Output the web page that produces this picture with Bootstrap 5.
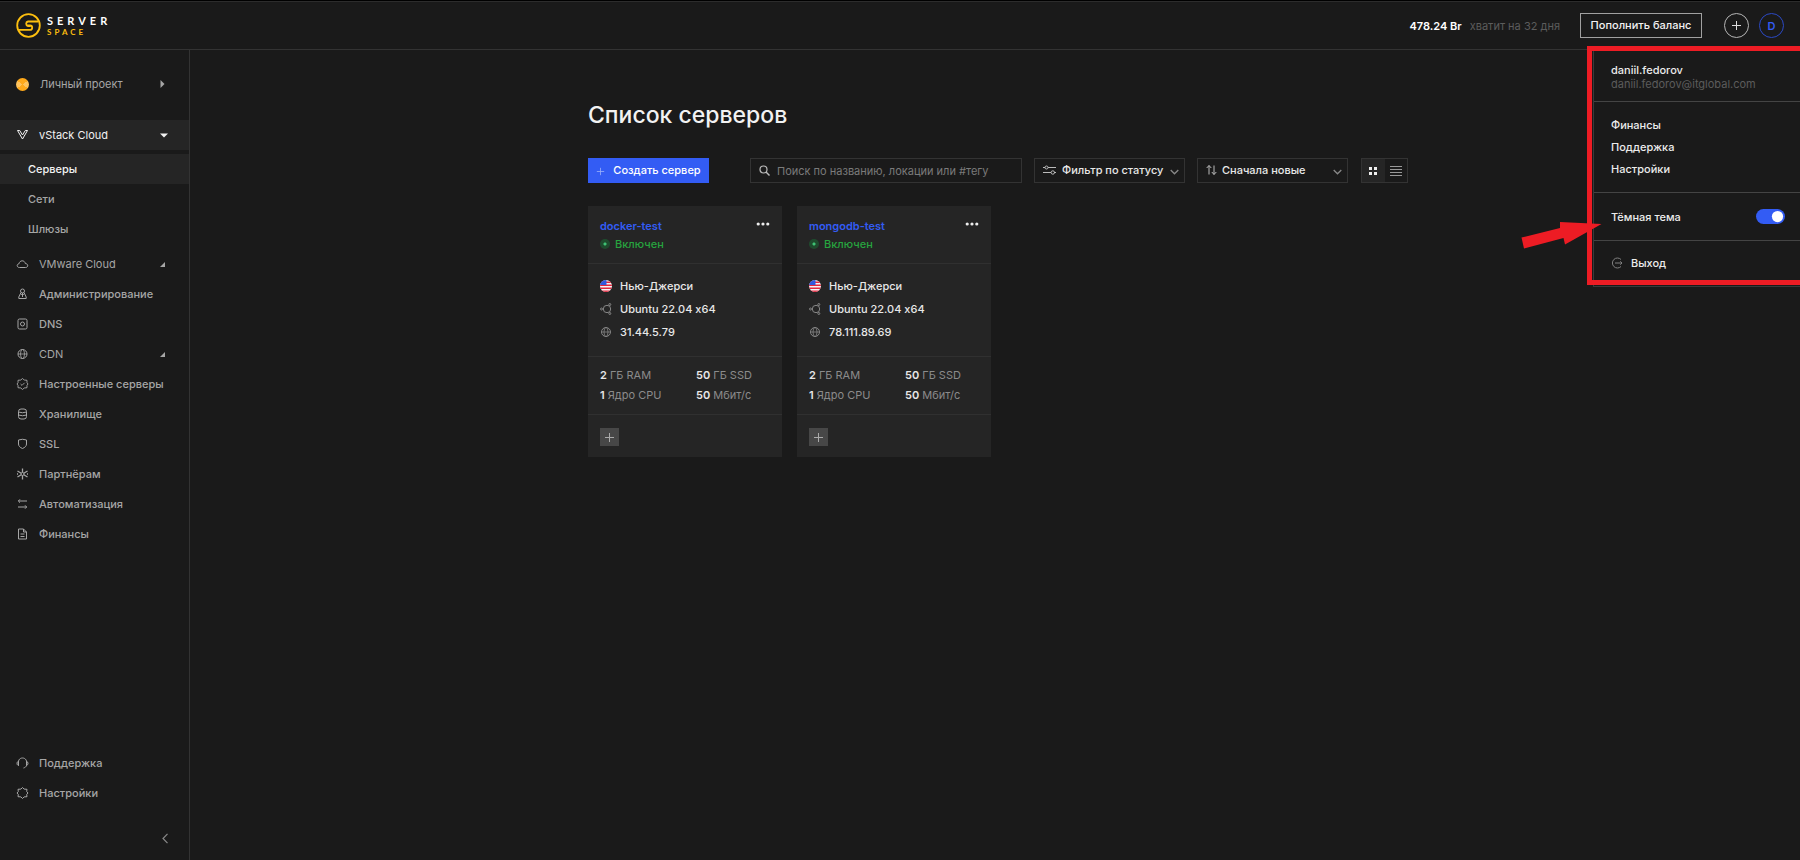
<!DOCTYPE html>
<html lang="ru" data-bs-theme="dark">
<head>
<meta charset="utf-8">
<meta name="viewport" content="width=device-width, initial-scale=1">
<title>Serverspace — Список серверов</title>
<link href="https://cdn.jsdelivr.net/npm/bootstrap@5.3.0/dist/css/bootstrap.min.css" rel="stylesheet">
<style>
  :root { --bg: #1a1a1a; --panel: #252525; --line: #333; --blue: #335cf4; --muted: #a6a6a6; --dim: #5c5c5c; --red: #ed1c24; }
  body { background: var(--bg); color: #e8e8e8; font-family: Inter, "Liberation Sans", sans-serif; font-size: 11px; line-height: 14px; font-weight: 500; font-variant-ligatures: no-contextual; border-top: 1px solid #000; overflow-x: hidden; }
  svg { display: block; flex: none; fill: none; stroke: currentColor; }
  a { color: inherit; text-decoration: none; }
  .page { min-height: calc(100vh - 1px); }
  .topbar { height: 49px; border-top: 1px solid #2c2c2c; border-bottom: 1px solid var(--line); padding: 0 16px; }
  .brand-text { font-family: Lato, sans-serif; font-weight: 700; line-height: 10px; padding-left: 6px; }
  .brand-text .top { font-size: 11px; letter-spacing: 4px; color: #fff; line-height: 12px; }
  .brand-text .bottom { font-size: 8px; letter-spacing: 3px; color: #fdbf0f; }
  .btn { --bs-btn-font-size: 11px; --bs-btn-line-height: 14px; --bs-btn-font-weight: 500; --bs-btn-border-radius: 0; }
  .btn-balance { height: 25px; width: 122px; margin: 0 22px 0 20px; padding: 0 0 2px; border: 1px solid #a0a0a0; color: #f2f2f2; }
  .btn-round { width: 25px; height: 25px; padding: 0; border-radius: 50%; border: 1px solid #b5b5b5; color: #ddd; }
  .btn-user { border-color: #2b49c4; color: var(--blue); font-weight: 600; margin-left: 10px; }
  .dim { color: var(--dim); font-weight: 400; }
  .sidebar { width: 190px; border-right: 1px solid var(--line); color: var(--muted); }
  .side-item { display: flex; align-items: center; width: 100%; height: 30px; padding: 0 20px 0 16px; border: 0; background: none; color: inherit; text-align: left; }
  .side-item > svg:first-child { width: 13px; margin-right: 10px; }
  .side-item .caret { margin-left: auto; fill: currentColor; stroke: none; }
  .side-item.open { background: var(--panel); color: #f2f2f2; }
  .side-item.project { margin: 19px 0 21px; font-weight: 400; }
  .side-item.side-sub { padding-left: 28px; }
  .side-list { margin-top: 5px; }
  .project-dot { width: 13px; height: 13px; border-radius: 50%; margin-right: 11px; background: conic-gradient(#ffa91a 0 15%, #ffc35c 0 35%, #ffa91a 0 65%, #ffc35c 0 85%, #ffa91a 0); }
  .side-bottom { margin-bottom: 25px; }
  .content-box { width: 100%; max-width: 820px; margin-left: 6px; padding-top: 50px; }
  h1 { font-size: 23px; line-height: 30px; font-weight: 500; color: #f2f2f2; }
  .tool { height: 25px; }
  .toolbar { margin-bottom: 23px; }
  .btn-create { width: 121px; margin-right: 41px; background: var(--blue); color: #fff; padding: 0 0 2px; border: 0; }
  .field { position: relative; }
  .field-pick { width: 151px; margin-left: 12px; }
  .field > svg { position: absolute; top: 6px; left: 9px; pointer-events: none; color: #bbb; }
  .field > .chev { left: auto; right: 6px; top: 11px; color: #888; }
  .field .form-control, .field .form-select { width: 100%; height: 25px; min-height: 0; padding: 0 8px 0 26px; border: 1px solid var(--line); border-radius: 0; background: none; color: #e8e8e8; font-size: 11px; line-height: 14px; font-weight: 500; }
  .field .form-control::placeholder { color: #7b7b7b; font-weight: 400; opacity: 1; }
  .field .form-select { padding: 0 8px 2px 24px; }
  .field .form-select.wide-icon { padding-left: 27px; }
  .field option { background: var(--panel); }
  .view-switch { width: 47px; margin-left: 13px; border: 1px solid var(--line); }
  .view-switch .btn { flex: 1; padding: 0; border: 0; color: #999; }
  .view-switch .active { background: var(--panel); color: #eee; }
  .servers { gap: 15px; }
  .server { width: 194px; background: var(--panel); }
  .server > * { padding: 0 12px; }
  .server > * + * { border-top: 1px solid #303030; }
  .srv-head { height: 57px; padding-top: 12px; }
  .srv-name { color: var(--blue); line-height: 16px; font-weight: 600; }
  .srv-state { color: #27a33f; line-height: 20px; gap: 5px; }
  .state-dot { width: 10px; height: 10px; border-radius: 50%; background: radial-gradient(circle, #3fc274 0 1px, #1e4b2d 2px 5px); }
  .srv-info { height: 93px; padding-top: 10px; }
  .srv-info li { display: flex; align-items: center; height: 23px; gap: 8px; }
  .srv-info svg { width: 12px; color: #868686; }
  .srv-spec { height: 58px; padding-top: 8px; line-height: 20px; color: #8b8b8b; font-weight: 400; }
  .srv-spec b { color: #e8e8e8; font-weight: 600; }
  .srv-spec > div:first-child { flex: none; width: 96px; }
  .srv-foot { height: 43px; padding-top: 13px; }
  .btn-tag { width: 19px; height: 18px; padding: 0; border: 0; background: #474747; color: #aaa; }
  .btn-dots { padding: 0; border: 0; height: 12px; color: #eee; }
  .user-menu { position: absolute; top: 49px; right: 0; width: 207px; background: var(--bg); border: 1px solid #3a3a3a; border-right: 0; color: #ececec; }
  .user-menu > * { padding: 12px 15px 12px 17px; }
  .user-menu > * + * { border-top: 1px solid #444; }
  .user-menu > .menu-user { padding-bottom: 10px; }
  .user-menu a { display: flex; align-items: center; height: 22px; }
  .user-menu > .menu-theme { height: 48px; padding-top: 0; padding-bottom: 0; }
  .user-menu > .menu-exit { padding-top: 11px; }
  .form-switch .form-check-input { width: 29px; height: 15px; margin: 0; border: 0; background-color: var(--blue); box-shadow: none; }
  .mark-frame { position: absolute; top: 45px; right: -5px; width: 218px; height: 239px; border: 5px solid var(--red); pointer-events: none; }
  .mark-arrow { position: absolute; top: 219px; right: 198px; fill: var(--red); stroke: none; pointer-events: none; }
</style>
</head>
<body>
<!-- shared icons -->
<svg width="0" height="0" class="position-absolute" aria-hidden="true">
  <symbol id="i-globe" viewBox="0 0 12 12"><circle cx="6" cy="6" r="4.500"/><ellipse cx="6" cy="6" rx="2" ry="4.500" stroke-width=".8"/><path d="M1.500 6h9" stroke-width=".8"/></symbol>
  <symbol id="i-plus" viewBox="0 0 11 11"><path d="M5.500 1v9M1 5.500h9"/></symbol>
  <symbol id="i-chev" viewBox="0 0 9 6"><path d="M.7 1l3.800 3.800L8.300 1" stroke-width="1.300"/></symbol>
  <symbol id="i-ubuntu" viewBox="0 0 12 12"><circle cx="7" cy="6" r="3.700"/><circle cx="1.500" cy="6" r="1"/><circle cx="9.800" cy="1.500" r="1"/><circle cx="9.800" cy="10.500" r="1"/></symbol>
  <symbol id="i-dots" viewBox="0 0 14 4"><g fill="currentColor" stroke="none"><circle cx="2.200" cy="2" r="1.600"/><circle cx="7" cy="2" r="1.600"/><circle cx="11.800" cy="2" r="1.600"/></g></symbol>
  <symbol id="i-flag" viewBox="0 0 12 12"><clipPath id="round"><circle cx="6" cy="6" r="6"/></clipPath><g clip-path="url(#round)" stroke="none"><path fill="#f4f4f4" d="M0 0h12v12H0z"/><path fill="#e3273e" d="M0 1.500h12V3H0zM0 4.500h12V6H0zM0 7.500h12V9H0zM0 10.500h12V12H0z"/><path fill="#3059dd" d="M0 0h6.500v5H0z"/></g></symbol>
</svg>

<div class="page d-flex flex-column position-relative">
  <header class="topbar d-flex align-items-center">
    <a href="#" class="d-flex align-items-center" aria-label="Serverspace">
      <svg width="25" height="25" viewBox="0 0 25 25" style="color:#fdbf0f"><circle cx="12.500" cy="12.500" r="11.300" stroke-width="1.800"/><path d="M22.500 8.500H12a2.300 2.300 0 0 0 0 4.500h2.500M10.500 12.500H14a2.200 2.200 0 0 1 0 4.400H2.500" stroke-width="1.800"/></svg>
      <span class="brand-text d-flex flex-column"><span class="top">SERVER</span><span class="bottom">SPACE</span></span>
    </a>
    <div class="d-flex align-items-center ms-auto">
      <span class="fw-semibold text-white">478.24 Br</span><span class="dim ms-2">хватит на 32 дня</span>
      <button type="button" class="btn btn-balance">Пополнить баланс</button>
      <button type="button" class="btn btn-round d-flex align-items-center justify-content-center" aria-label="Создать"><svg width="11" height="11"><use href="#i-plus"/></svg></button>
      <button type="button" class="btn btn-round btn-user" aria-label="Профиль">D</button>
    </div>
  </header>

  <div class="d-flex flex-grow-1">
    <nav class="sidebar d-flex flex-column flex-shrink-0">
      <button type="button" class="side-item project"><span class="project-dot"></span>Личный проект<svg class="caret me-1" width="5" height="8" viewBox="0 0 5 8"><path d="M.5 0l4 4-4 4z"/></svg></button>
      <button type="button" class="side-item open mb-1"><svg width="13" height="12" viewBox="0 0 13 12"><path d="M1.500 1.500h2.200L6.500 6l2.800-4.500h2.200L6.500 10z"/></svg>vStack Cloud<svg class="caret" width="9" height="5" viewBox="0 0 9 5"><path d="M0 .5h8L4 4.500z"/></svg></button>
      <a href="#" class="side-item side-sub open">Серверы</a>
      <a href="#" class="side-item side-sub">Сети</a>
      <a href="#" class="side-item side-sub">Шлюзы</a>
      <div class="side-list">
        <button type="button" class="side-item"><svg width="13" height="12" viewBox="0 0 13 12"><path d="M3.500 9.500C.5 9.500.5 6 3 5.800 3.500 2 8.700 1.800 9.300 5.500c3.200.2 3.200 4 .2 4z"/></svg>VMware Cloud<svg class="caret me-1" width="5" height="5"><path d="M5 0v5H0z"/></svg></button>
        <a href="#" class="side-item"><svg width="13" height="12" viewBox="0 0 13 12"><circle cx="6.500" cy="3" r="2"/><path d="M5 4.500L2.800 9v1.500h7.400V9L8 4.500M6.500 5v4M5.200 6.500h2.600"/></svg>Администрирование</a>
        <a href="#" class="side-item"><svg width="13" height="12" viewBox="0 0 13 12"><rect x="2" y="1" width="9" height="10" rx="1.500"/><circle cx="6.500" cy="6" r="2"/></svg>DNS</a>
        <button type="button" class="side-item"><svg width="13" height="12"><use href="#i-globe"/></svg>CDN<svg class="caret me-1" width="5" height="5"><path d="M5 0v5H0z"/></svg></button>
        <a href="#" class="side-item"><svg width="13" height="12" viewBox="0 0 13 12"><path d="M6.500.5l1.700 1.500 2.800.3v2.400L12 6l-1 1.300v2.400l-2.800.3-1.700 1.500L4.800 10 2 9.700V7.300L1 6l1-1.300V2.300L4.800 2zM4.600 6l1.400 1.400 2.600-2.600" stroke-width=".9"/></svg>Настроенные серверы</a>
        <a href="#" class="side-item"><svg width="13" height="12" viewBox="0 0 13 12"><rect x="2.500" y="1" width="8" height="10" rx="2.500"/><path d="M2.500 4q4 1.500 8 0M2.500 7q4 1.500 8 0"/></svg>Хранилище</a>
        <a href="#" class="side-item"><svg width="13" height="12" viewBox="0 0 13 12"><path d="M2.500 2q4-1.500 8 0v4c0 2-1.500 3.500-4 4.500C4 9.500 2.500 8 2.500 6z"/></svg>SSL</a>
        <a href="#" class="side-item"><svg width="13" height="12" viewBox="0 0 13 12"><circle cx="6.500" cy="6" r="1.500"/><path d="M6.500.5v4M6.500 7.500v4M1.500 3l3.700 2.200M7.800 6.800L11.500 9M1.500 9l3.700-2.200M7.800 5.200L11.500 3M1 6h1M11 6h1" stroke-width="1.300"/></svg>Партнёрам</a>
        <a href="#" class="side-item"><svg width="13" height="12" viewBox="0 0 13 12"><path d="M11 3H2.500M4 1.300L2.300 3 4 4.700M2 9h8.500M9 7.300L10.700 9 9 10.700"/></svg>Автоматизация</a>
        <a href="#" class="side-item"><svg width="13" height="12" viewBox="0 0 13 12"><path d="M2.500 1h5L10.500 4v7h-8zM7.500 1v3h3M4.500 6h4M4.500 8.500h4"/></svg>Финансы</a>
      </div>
      <div class="side-bottom mt-auto">
        <a href="#" class="side-item"><svg width="13" height="12" viewBox="0 0 13 12"><path d="M2.500 8.500C1.500 3.500 3.500 1 6.500 1s5 2.500 4 7.500c-.5 1.500-1.500 2-3 2.500M2.500 4.300C.5 4.800.5 8 2.500 8.500zM10.500 4.300c2 .5 2 3.700 0 4.200z"/></svg>Поддержка</a>
        <a href="#" class="side-item"><svg width="13" height="12" viewBox="0 0 13 12"><path d="M6.500.5l1.600 1.600 2.900.2-.3 2.200L12 6l-1.300 1.500.3 2.200-2.900.2-1.600 1.600-1.600-1.600L2 9.700l.3-2.200L1 6l1.300-1.500L2 2.300l2.900-.2z"/></svg>Настройки</a>
      </div>
      <button type="button" class="btn p-0 border-0 align-self-end me-3 mb-3" style="color:#888" aria-label="Свернуть меню"><svg width="13" height="11" viewBox="0 0 13 11"><path d="M7.500.8L3 5.500l4.500 4.700" stroke-width="1.200"/></svg></button>
    </nav>

    <main class="flex-grow-1 d-flex justify-content-center px-2">
      <div class="content-box">
        <h1 class="mb-4 pb-1">Список серверов</h1>
        <div class="toolbar d-flex align-items-center">
          <button type="button" class="btn btn-create tool d-flex align-items-center justify-content-center gap-2"><svg class="opacity-50 mt-1" width="9" height="9" viewBox="0 0 11 11"><use href="#i-plus" width="11" height="11"/></svg>Создать сервер</button>
          <div class="field flex-grow-1">
            <svg width="11" height="13" viewBox="0 0 11 13"><circle cx="4.500" cy="5.500" r="3.500" stroke-width="1.200"/><path d="M7 8l3.500 3.500" stroke-width="1.400"/></svg>
            <input type="text" class="form-control" aria-label="Поиск" placeholder="Поиск по названию, локации или #тегу">
          </div>
          <div class="field field-pick">
            <svg width="13" height="12" viewBox="0 0 13 12"><path d="M0 3.500h2M5 3.500h8M0 8.500h8M11 8.500h2"/><circle cx="3.500" cy="3.500" r="1.500"/><circle cx="9.800" cy="8.500" r="1.700"/></svg>
            <select class="form-select wide-icon" aria-label="Статус"><option>Фильтр по статусу</option></select>
            <svg class="chev" width="9" height="6"><use href="#i-chev"/></svg>
          </div>
          <div class="field field-pick">
            <svg width="11" height="12" viewBox="0 0 11 12"><path d="M3 10.500V1.500M.7 4L3 1.500 5.300 4M8 1.500v9M5.800 8L8 10.500 10.300 8"/></svg>
            <select class="form-select" aria-label="Сортировка"><option>Сначала новые</option></select>
            <svg class="chev" width="9" height="6"><use href="#i-chev"/></svg>
          </div>
          <div class="view-switch tool d-flex">
            <button type="button" class="btn active d-flex align-items-center justify-content-center" aria-label="Плитка"><svg width="8" height="8" viewBox="0 0 8 8"><path fill="currentColor" stroke="none" d="M0 0h3v3H0zM5 0h3v3H5zM0 5h3v3H0zM5 5h3v3H5z"/></svg></button>
            <button type="button" class="btn d-flex align-items-center justify-content-center" aria-label="Список"><svg width="12" height="10" viewBox="0 0 12 10"><path d="M0 .5h12M0 3.500h12M0 6.500h12M0 9.500h12"/></svg></button>
          </div>
        </div>

        <div class="servers d-flex">
          <section class="server">
            <div class="srv-head">
              <div class="d-flex justify-content-between"><a href="#" class="srv-name">docker-test</a><button type="button" class="btn btn-dots" aria-label="Действия"><svg width="14" height="4"><use href="#i-dots"/></svg></button></div>
              <div class="srv-state d-flex align-items-center"><span class="state-dot"></span>Включен</div>
            </div>
            <ul class="srv-info list-unstyled m-0">
              <li><svg width="12" height="12"><use href="#i-flag"/></svg>Нью-Джерси</li>
              <li><svg width="12" height="12"><use href="#i-ubuntu"/></svg>Ubuntu 22.04 x64</li>
              <li><svg width="12" height="12"><use href="#i-globe"/></svg>31.44.5.79</li>
            </ul>
            <div class="srv-spec d-flex">
              <div><b>2</b> ГБ RAM<br><b>1</b> Ядро CPU</div><div><b>50</b> ГБ SSD<br><b>50</b> Мбит/с</div>
            </div>
            <div class="srv-foot"><button type="button" class="btn btn-tag d-flex align-items-center justify-content-center" aria-label="Добавить тег"><svg width="11" height="11"><use href="#i-plus"/></svg></button></div>
          </section>
          <section class="server">
            <div class="srv-head">
              <div class="d-flex justify-content-between"><a href="#" class="srv-name">mongodb-test</a><button type="button" class="btn btn-dots" aria-label="Действия"><svg width="14" height="4"><use href="#i-dots"/></svg></button></div>
              <div class="srv-state d-flex align-items-center"><span class="state-dot"></span>Включен</div>
            </div>
            <ul class="srv-info list-unstyled m-0">
              <li><svg width="12" height="12"><use href="#i-flag"/></svg>Нью-Джерси</li>
              <li><svg width="12" height="12"><use href="#i-ubuntu"/></svg>Ubuntu 22.04 x64</li>
              <li><svg width="12" height="12"><use href="#i-globe"/></svg>78.111.89.69</li>
            </ul>
            <div class="srv-spec d-flex">
              <div><b>2</b> ГБ RAM<br><b>1</b> Ядро CPU</div><div><b>50</b> ГБ SSD<br><b>50</b> Мбит/с</div>
            </div>
            <div class="srv-foot"><button type="button" class="btn btn-tag d-flex align-items-center justify-content-center" aria-label="Добавить тег"><svg width="11" height="11"><use href="#i-plus"/></svg></button></div>
          </section>
        </div>
      </div>
    </main>
  </div>

  <aside class="user-menu">
    <div class="menu-user"><div>daniil.fedorov</div><div class="dim">daniil.fedorov@itglobal.com</div></div>
    <div><a href="#">Финансы</a><a href="#">Поддержка</a><a href="#">Настройки</a></div>
    <div class="menu-theme form-switch d-flex align-items-center justify-content-between"><label for="dark">Тёмная тема</label><input class="form-check-input" type="checkbox" role="switch" id="dark" checked></div>
    <div class="menu-exit"><a href="#"><svg width="12" height="12" viewBox="0 0 12 12" class="me-2" style="color:#808080"><path d="M10 2.500A5 5 0 1 0 10 9.500M4 6h7M9.300 4.300L11 6 9.300 7.700"/></svg>Выход</a></div>
  </aside>
  <div class="mark-frame"></div>
  <svg class="mark-arrow" width="82" height="30" viewBox="0 0 82 30" aria-hidden="true"><path d="M1.500 17.500L40 8V2l41.500 2L45 24.500 43.500 18 4 28.500z"/></svg>
</div>
<script src="https://cdn.jsdelivr.net/npm/bootstrap@5.3.0/dist/js/bootstrap.bundle.min.js"></script>
</body>
</html>
